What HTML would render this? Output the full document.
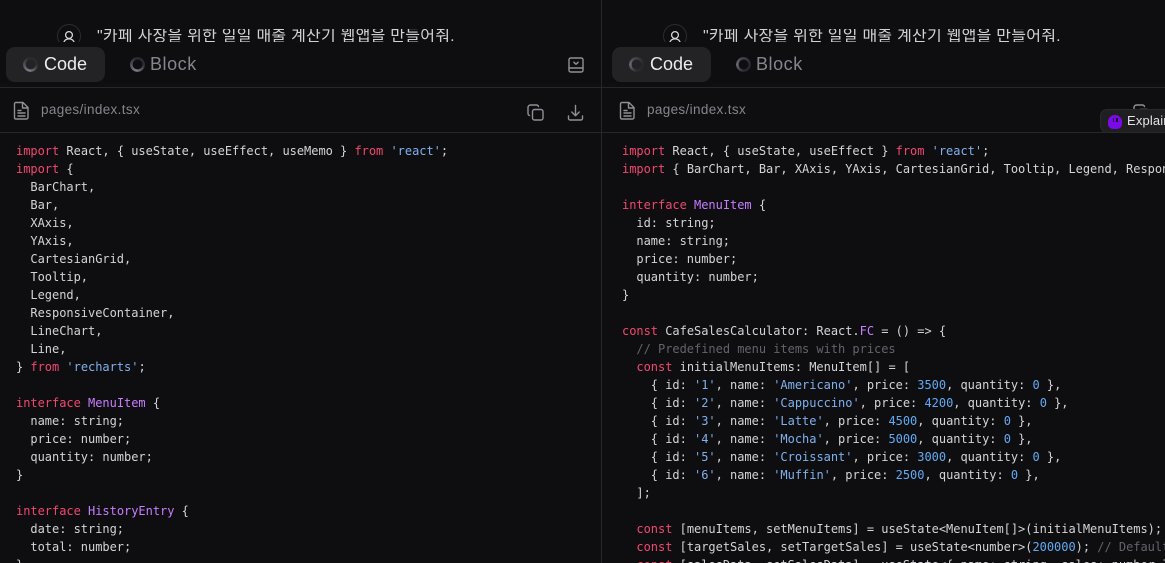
<!DOCTYPE html>
<html lang="ko"><head><meta charset="utf-8"><style>
*{box-sizing:border-box}
html,body{margin:0;padding:0;width:1165px;height:563px;overflow:hidden;background:#0e0e11}
.p{position:absolute;top:0;height:563px;overflow:hidden;background:#0e0e11}
.a{position:absolute}
.prompt{left:97px;top:29px;width:480px;height:13px;overflow:hidden;font:16px/16px "Liberation Sans","Noto Sans CJK KR",sans-serif;color:#d2d2d6;white-space:nowrap;letter-spacing:.25px}
.av{left:57px;top:24px;width:24px;height:24px;border:1px solid #2c2c30;border-radius:50%}
.bar{left:0;top:42px;width:601px;height:45px;background:#0e0e11}
.tab{left:6px;top:47px;width:99px;height:35px;border-radius:9px;background:#232326}
.lab{top:53px;font:18px/22px "Liberation Sans",sans-serif}
.ln{left:0;width:1165px;height:1px;background:#27272a;z-index:2}
.sp{top:57px;width:15px;height:15px;border-radius:50%;-webkit-mask:radial-gradient(circle,transparent 4.6px,#000 5.1px);mask:radial-gradient(circle,transparent 4.6px,#000 5.1px)}
.s1{background:conic-gradient(from 90deg,#2a2a30,#7d7d88 28%,#5a5a64 45%,#2a2a30 70%)}
.s2{background:conic-gradient(from 180deg,#2a2a30,#6a6a78 25%,#44444e 45%,#26262c 75%,#2a2a30)}
.fn{left:41px;top:101px;font:13.5px/18px "Liberation Sans",sans-serif;color:#85858c;letter-spacing:.35px}
pre{position:absolute;margin:0;left:16px;top:142px;font:12px/18px "DejaVu Sans Mono",monospace;letter-spacing:-.024px;color:#d4d4d8;white-space:pre}
.k{color:#f1476f}.t{color:#c77dff}.s{color:#7fb0ec}.n{color:#63a9f2}.c{color:#63636c}
svg{position:absolute;fill:none;stroke:#8f8f96;stroke-width:1.4;stroke-linecap:round;stroke-linejoin:round}
</style></head><body>

<div class="p" style="left:0;width:601px">
<div class="a av"><svg style="left:3px;top:4px" width="16" height="16" viewBox="0 0 16 16"><circle cx="8" cy="6" r="3.4" stroke="#d8d8db" stroke-width="1.3"/><path d="M2.500 14.500c.6-3 2.600-4.600 5.500-4.600s4.900 1.600 5.500 4.600" stroke="#d8d8db" stroke-width="1.300"/></svg></div>
<div class="a prompt">"카페 사장을 위한 일일 매출 계산기 웹앱을 만들어줘.</div>
<div class="a bar"></div>
<div class="a tab"></div>
<div class="a sp s1" style="left:23px"></div>
<div class="a lab" style="left:44px;color:#ececee">Code</div>
<div class="a sp s1" style="left:130px"></div>
<div class="a lab" style="left:150px;color:#85858c;letter-spacing:.55px">Block</div>
<svg style="left:12px;top:101px" width="18" height="19" viewBox="0 0 18 19"><path d="M3.500 1.500h7.500l5 5v10a1.500 1.500 0 0 1-1.500 1.500h-11A1.500 1.500 0 0 1 2.500 16.500V3A1.500 1.500 0 0 1 3.500 1.500zM10.500 1.500v5.500H16M6 9.500h3M6 12h7M6 15h7"/></svg>
<div class="a fn">pages/index.tsx</div>
<svg style="left:527px;top:104px" width="17" height="17" viewBox="0 0 17 17"><rect x="5.500" y="5.500" width="10.500" height="10.500" rx="2"/><path d="M11.500 2.500c-.3-.9-1-1.500-2-1.500H3.500A2.500 2.500 0 0 0 1 3.500V9.500c0 1 .6 1.700 1.500 2"/></svg>
<svg style="left:567px;top:104px" width="17" height="17" viewBox="0 0 17 17"><path d="M8.500 1.500v10M4.800 8l3.700 3.700L12.200 8M1.500 12v2.500A1.500 1.500 0 0 0 3 16h11a1.500 1.500 0 0 0 1.500-1.500V12"/></svg>
<svg style="left:568px;top:57px" width="16" height="16" viewBox="0 0 16 16"><rect x="1" y="1" width="14" height="14" rx="1.800"/><path d="M1 11h14M5.800 5.200 8 7.200l2.200-2"/></svg>
<pre><span class="k">import</span> React, { useState, useEffect, useMemo } <span class="k">from</span> <span class="s">'react'</span>;
<span class="k">import</span> {
  BarChart,
  Bar,
  XAxis,
  YAxis,
  CartesianGrid,
  Tooltip,
  Legend,
  ResponsiveContainer,
  LineChart,
  Line,
} <span class="k">from</span> <span class="s">'recharts'</span>;

<span class="k">interface</span> <span class="t">MenuItem</span> {
  name: string;
  price: number;
  quantity: number;
}

<span class="k">interface</span> <span class="t">HistoryEntry</span> {
  date: string;
  total: number;
}</pre>
</div>

<div class="a" style="left:601px;top:0;width:1px;height:563px;background:#27272a;z-index:2"></div>

<div class="p" style="left:606px;width:559px">
<div class="a av"><svg style="left:3px;top:4px" width="16" height="16" viewBox="0 0 16 16"><circle cx="8" cy="6" r="3.4" stroke="#d8d8db" stroke-width="1.3"/><path d="M2.500 14.500c.6-3 2.600-4.600 5.500-4.600s4.900 1.600 5.500 4.600" stroke="#d8d8db" stroke-width="1.300"/></svg></div>
<div class="a prompt">"카페 사장을 위한 일일 매출 계산기 웹앱을 만들어줘.</div>
<div class="a bar"></div>
<div class="a tab"></div>
<div class="a sp s2" style="left:23px"></div>
<div class="a lab" style="left:44px;color:#ececee">Code</div>
<div class="a sp s2" style="left:130px"></div>
<div class="a lab" style="left:150px;color:#85858c;letter-spacing:.55px">Block</div>
<svg style="left:12px;top:101px" width="18" height="19" viewBox="0 0 18 19"><path d="M3.500 1.500h7.500l5 5v10a1.500 1.500 0 0 1-1.500 1.500h-11A1.500 1.500 0 0 1 2.500 16.500V3A1.500 1.500 0 0 1 3.500 1.500zM10.500 1.500v5.500H16M6 9.500h3M6 12h7M6 15h7"/></svg>
<div class="a fn">pages/index.tsx</div>
<svg style="left:527px;top:104px" width="17" height="17" viewBox="0 0 17 17"><rect x="5.500" y="5.500" width="10.500" height="10.500" rx="2"/><path d="M11.500 2.500c-.3-.9-1-1.500-2-1.500H3.500A2.500 2.500 0 0 0 1 3.500V9.500c0 1 .6 1.700 1.500 2"/></svg>
<pre><span class="k">import</span> React, { useState, useEffect } <span class="k">from</span> <span class="s">'react'</span>;
<span class="k">import</span> { BarChart, Bar, XAxis, YAxis, CartesianGrid, Tooltip, Legend, ResponsiveContainer } <span class="k">from</span> <span class="s">'recharts'</span>;

<span class="k">interface</span> <span class="t">MenuItem</span> {
  id: string;
  name: string;
  price: number;
  quantity: number;
}

<span class="k">const</span> CafeSalesCalculator: React.<span class="t">FC</span> = () =&gt; {
  <span class="c">// Predefined menu items with prices</span>
  <span class="k">const</span> initialMenuItems: MenuItem[] = [
    { id: <span class="s">'1'</span>, name: <span class="s">'Americano'</span>, price: <span class="n">3500</span>, quantity: <span class="n">0</span> },
    { id: <span class="s">'2'</span>, name: <span class="s">'Cappuccino'</span>, price: <span class="n">4200</span>, quantity: <span class="n">0</span> },
    { id: <span class="s">'3'</span>, name: <span class="s">'Latte'</span>, price: <span class="n">4500</span>, quantity: <span class="n">0</span> },
    { id: <span class="s">'4'</span>, name: <span class="s">'Mocha'</span>, price: <span class="n">5000</span>, quantity: <span class="n">0</span> },
    { id: <span class="s">'5'</span>, name: <span class="s">'Croissant'</span>, price: <span class="n">3000</span>, quantity: <span class="n">0</span> },
    { id: <span class="s">'6'</span>, name: <span class="s">'Muffin'</span>, price: <span class="n">2500</span>, quantity: <span class="n">0</span> },
  ];

  <span class="k">const</span> [menuItems, setMenuItems] = useState&lt;MenuItem[]&gt;(initialMenuItems);
  <span class="k">const</span> [targetSales, setTargetSales] = useState&lt;number&gt;(<span class="n">200000</span>); <span class="c">// Default target</span>
  <span class="k">const</span> [salesData, setSalesData] = useState&lt;{ name: string, sales: number }[]&gt;([]);</pre>
</div>

<div class="a ln" style="top:87px"></div>
<div class="a ln" style="top:132px"></div>

<div class="a" style="left:1100px;top:109px;width:80px;height:24px;border-radius:7px;background:#1f1f22;border:1px solid #29292d;z-index:3"></div>
<div class="a" style="left:1108px;top:114.500px;width:14px;height:14px;border-radius:7px 7px 5px 5px;background:#7a0be8;z-index:3"></div>
<div class="a" style="left:1112.500px;top:118px;width:1.500px;height:3.500px;background:#1a0833;z-index:3"></div>
<div class="a" style="left:1116px;top:118px;width:1.500px;height:3.500px;background:#1a0833;z-index:3"></div>
<div class="a" style="left:1127px;top:112px;font:13px/18px 'Liberation Sans',sans-serif;color:#e4e4e7;letter-spacing:.15px;z-index:3">Explain</div>
</body></html>
